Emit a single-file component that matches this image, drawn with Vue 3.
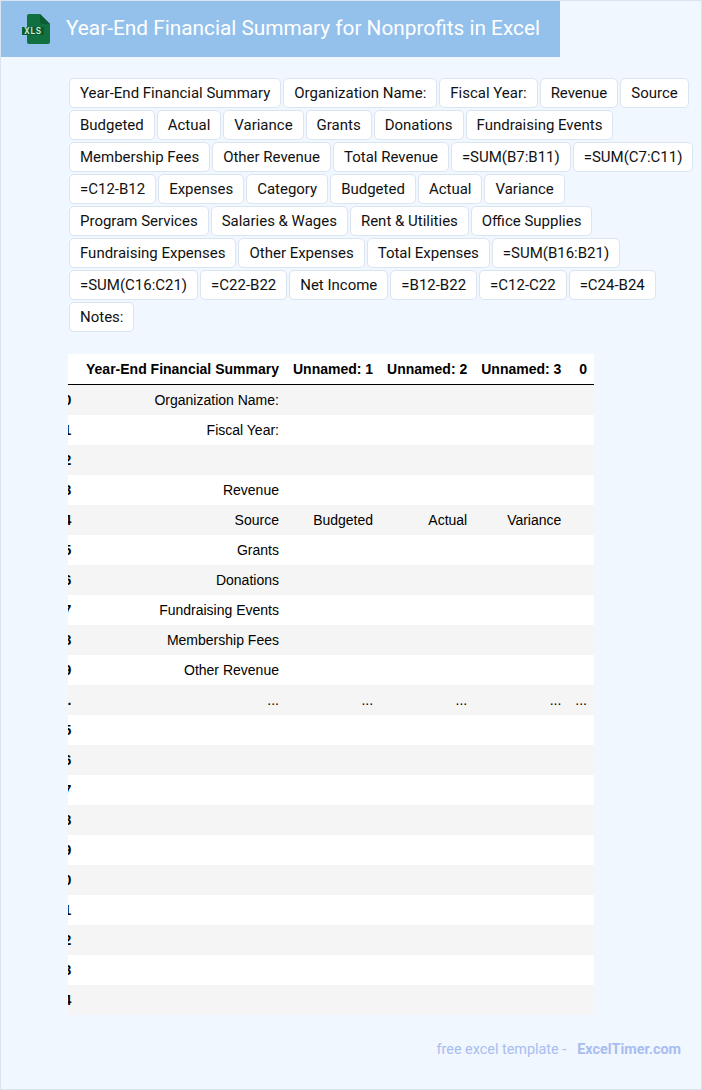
<script setup>
const tags = ['Year-End Financial Summary','Organization Name:','Fiscal Year:','Revenue','Source','Budgeted','Actual','Variance','Grants','Donations','Fundraising Events','Membership Fees','Other Revenue','Total Revenue','=SUM(B7:B11)','=SUM(C7:C11)','=C12-B12','Expenses','Category','Budgeted','Actual','Variance','Program Services','Salaries & Wages','Rent & Utilities','Office Supplies','Fundraising Expenses','Other Expenses','Total Expenses','=SUM(B16:B21)','=SUM(C16:C21)','=C22-B22','Net Income','=B12-B22','=C12-C22','=C24-B24','Notes:']
const headers = ['', 'Year-End Financial Summary', 'Unnamed: 1', 'Unnamed: 2', 'Unnamed: 3', '0']
const rows = [
  ['10','Organization Name:','','','',''],
  ['11','Fiscal Year:','','','',''],
  ['12','','','','',''],
  ['13','Revenue','','','',''],
  ['14','Source','Budgeted','Actual','Variance',''],
  ['15','Grants','','','',''],
  ['16','Donations','','','',''],
  ['17','Fundraising Events','','','',''],
  ['18','Membership Fees','','','',''],
  ['19','Other Revenue','','','',''],
  ['...','...','...','...','...','...'],
  ['25','','','','',''],['26','','','','',''],['27','','','','',''],['28','','','','',''],['29','','','','',''],
  ['30','','','','',''],['31','','','','',''],['32','','','','',''],['33','','','','',''],['34','','','','','']
]
</script>

<template>
  <div class="page">
    <header class="banner">
      <svg class="logo" width="28" height="30" viewBox="0 0 28 30">
        <path d="M5 2Q5 0 7 0H18L28 10V28Q28 30 26 30H7Q5 30 5 28Z" fill="#107040"/>
        <path d="M18 0L28 10H20Q18 10 18 8Z" fill="#0c5c33"/>
        <rect x="0" y="13" width="22" height="8" fill="#0c5c33"/>
      </svg>
      <span class="logo-text">XLS</span>
      <h1>Year-End Financial Summary for Nonprofits in Excel</h1>
    </header>
    <main class="content">
      <div class="tags">
        <span v-for="(t, i) in tags" :key="i" class="tag">{{ t }}</span>
      </div>
      <div class="table-wrap">
        <table>
          <thead>
            <tr><th v-for="(h, i) in headers" :key="i">{{ h }}</th></tr>
          </thead>
          <tbody>
            <tr v-for="(r, i) in rows" :key="i">
              <template v-for="(c, j) in r" :key="j">
                <th v-if="j === 0">{{ c }}</th>
                <td v-else>{{ c }}</td>
              </template>
            </tr>
          </tbody>
        </table>
      </div>
    </main>
    <footer class="foot">
      <span>free excel template -</span>
      <b>ExcelTimer.com</b>
    </footer>
  </div>
</template>

<style>
html, body { margin: 0; padding: 0; }
</style>

<style scoped>
.page {
  box-sizing: border-box;
  width: 702px;
  height: 1090px;
  background: #f0f7ff;
  border: 1px solid #d8e4f0;
  font-family: Roboto, sans-serif;
  display: flex;
  flex-direction: column;
}
.banner {
  position: relative;
  width: 559px;
  height: 56px;
  flex: none;
  background: #93c1ec;
  display: flex;
  align-items: center;
  padding-left: 21px;
  box-sizing: border-box;
}
.logo { flex: none; }
.logo-text {
  position: absolute;
  left: 21px;
  top: 25px;
  width: 22px;
  text-align: center;
  font: 500 8.5px/10px Roboto, sans-serif;
  letter-spacing: 0.8px;
  color: #d5efdf;
}
.banner h1 {
  margin: 0 0 2px 16px;
  font: 400 20.8px/26px Roboto, sans-serif;
  color: #fff;
  white-space: nowrap;
}
.content {
  padding: 21px 0 0 67px;
  flex: 1;
}
.tags {
  display: flex;
  flex-wrap: wrap;
  gap: 2px;
  width: 630px;
  margin-left: 1px;
}
.tag {
  box-sizing: border-box;
  height: 30px;
  padding: 0 10px;
  display: flex;
  align-items: center;
  background: #fff;
  border: 1px solid #dbe5f1;
  border-radius: 5px;
  font-size: 14.99px;
  color: #111;
  white-space: nowrap;
}
.table-wrap {
  width: 526px;
  margin-top: 22px;
  overflow: hidden;
}
table {
  margin-left: -19.3px;
  border-collapse: collapse;
  background: #fff;
  font: 14px "Liberation Sans", Arial, sans-serif;
  color: #000;
}
th, td {
  padding: 0 7px;
  height: 30px;
  text-align: right;
  white-space: nowrap;
}
th { font-weight: 700; }
td { font-weight: 400; }
tr > :first-child { padding-right: 7.73px; }
thead tr { border-bottom: 1px solid #000; }
thead th { height: 30px; }
tbody tr:nth-child(odd) { background: #f5f5f5; }
.foot {
  height: 74px;
  flex: none;
  box-sizing: border-box;
  padding: 0 20px 5px 0;
  display: flex;
  justify-content: flex-end;
  align-items: center;
  gap: 11px;
  font-size: 14.4px;
  color: #a9bdf0;
}
.foot b { font-weight: 700; }
</style>
